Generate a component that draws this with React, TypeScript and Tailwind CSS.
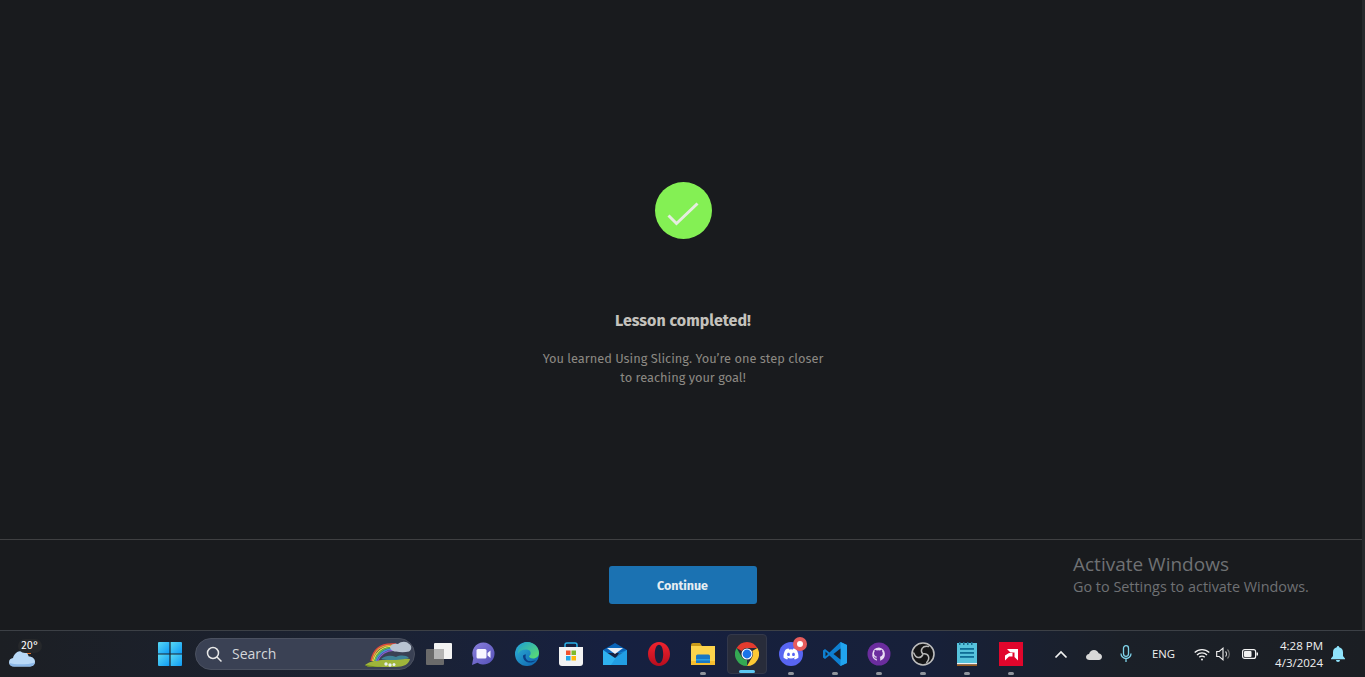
import React from "react";

const sysFont = "font-['Open_Sans','Noto_Sans',sans-serif]";

function Dot() {
  return <span className="absolute bottom-[1px] left-1/2 -ml-[3px] h-[3px] w-[6px] rounded-full bg-[#8f949c]" />;
}

function Slot({ dot, children }: { dot?: boolean; children: React.ReactNode }) {
  return (
    <div className="relative flex h-[44px] w-[44px] shrink-0 items-center justify-center">
      {children}
      {dot && <Dot />}
    </div>
  );
}

function WinLogo() {
  return (
    <svg width="24" height="24" viewBox="0 0 24 24">
      <defs>
        <linearGradient id="w" x1="0" y1="0" x2="1" y2="1">
          <stop offset="0" stopColor="#58d8f4" />
          <stop offset="1" stopColor="#0f9bf5" />
        </linearGradient>
      </defs>
      <path d="M1 0h10.400v11.400H0V1a1 1 0 0 1 1-1z" fill="url(#w)" />
      <path d="M12.600 0H23a1 1 0 0 1 1 1v10.400H12.600z" fill="url(#w)" />
      <path d="M0 12.600h11.400V24H1a1 1 0 0 1-1-1z" fill="url(#w)" />
      <path d="M12.600 12.600H24V23a1 1 0 0 1-1 1H12.600z" fill="url(#w)" />
    </svg>
  );
}

function Weather() {
  return (
    <div className="relative flex h-[47px] w-[48px] shrink-0 items-center justify-center">
      <svg width="26" height="20" viewBox="0 0 26 20" className="absolute left-[9px] top-[16px]">
        <rect x="16" y="3" width="6" height="4" fill="#e8762a" />
        <path d="M5 19.500C2 19.500 0 17.600 0 15.200c0-2.300 1.800-4 4-4.200C5 6.800 8.400 4 12.400 4c3.600 0 6.600 2.200 7.400 5.600 3.400 0 6.200 2.100 6.200 5.200 0 2.800-2.200 4.700-5 4.700z" fill="#b9d9f7" />
        <path d="M5 19.500C2 19.500.5 18 .3 16c5 1.800 19 1.800 25.500-.6-.5 2.500-2.500 4.100-4.800 4.100z" fill="#8cb8e8" />
      </svg>
      <span className="absolute left-[18px] top-[8px] flex h-[14px] w-[24px] items-center justify-center rounded-full bg-[#26282b] text-[11px] leading-none text-white">
        20°
      </span>
    </div>
  );
}

function Rainbow() {
  return (
    <svg width="50" height="30" viewBox="0 0 50 30" className="absolute left-[169px] top-[0px]">
      <path d="M0 26c5-4 12-5 20-5 9-2 18-2 25-1-1 5-6 8-15 8H8c-4 0-7-1-8-2z" fill="#9fb53a" />
      <path d="M0 26c8 1 12 2 20 2H8c-4 0-7-1-8-2z" fill="#6f8a20" />
      <path d="M16 20c5-4 10-4 15-2 4-2 10-2 13 1-6 2-22 3-28 1z" fill="#3f8296" />
      <g fill="none" strokeWidth="1.300">
        <path d="M6 22C8 10 16 3.500 31 5" stroke="#e8463c" />
        <path d="M7.300 22C9.300 11 17 4.800 31 6.300" stroke="#eea63a" />
        <path d="M8.600 22C10.600 12.500 18 6.100 31 7.600" stroke="#e9e14a" />
        <path d="M9.900 22C11.900 14 19 7.400 31 8.900" stroke="#56c25a" />
        <path d="M11.200 22C13.200 15.500 20 8.700 31 10.200" stroke="#4a90dc" />
        <path d="M12.500 22C14.500 17 21 10 31 11.500" stroke="#8a5bd0" />
      </g>
      <path d="M25 8c1-3 5-4 8-3 3-3 9-3 11 0 3 1 3 6 0 7.500-4 1-9 1-13 0-3 0-6-2-6-4.500z" fill="#b9c4d2" />
      <circle cx="21" cy="25" r="1.700" fill="#e8f0f0" />
      <circle cx="25" cy="26" r="1.700" fill="#e8f0f0" />
      <circle cx="29" cy="25.500" r="1.500" fill="#e8f0f0" />
    </svg>
  );
}

function SearchBox() {
  return (
    <div className="relative flex h-[32px] w-[220px] items-center rounded-full border border-[#4b5160] bg-[#3a4154]">
      <svg width="17" height="17" viewBox="0 0 17 17" className="ml-[10px]" fill="none" stroke="#e8e8e8" strokeWidth="1.500">
        <circle cx="7" cy="7" r="5.500" />
        <path d="M11 11l4.500 4.500" />
      </svg>
      <span className={`ml-[9px] text-[14px] leading-none text-[#d4d6da] ${sysFont}`}>Search</span>
      <Rainbow />
    </div>
  );
}

function TaskView() {
  return (
    <svg width="26" height="22" viewBox="0 0 26 22">
      <rect x="8" y="0" width="18" height="16" rx="1" fill="#f3f3f3" />
      <rect x="0" y="6" width="18" height="16" rx="1" fill="#6a6a6a" />
      <rect x="8" y="6" width="10" height="10" fill="#b4b4b4" />
    </svg>
  );
}

function Teams() {
  return (
    <svg width="24" height="24" viewBox="0 0 24 24">
      <defs>
        <linearGradient id="t" x1="0" y1="0" x2="1" y2="1">
          <stop offset="0" stopColor="#8a80dc" />
          <stop offset="1" stopColor="#5450b8" />
        </linearGradient>
      </defs>
      <path d="M12.500 0.500A11 11 0 1 1 6.500 20.700L1 23 2.300 16A11 11 0 0 1 12.500 0.500z" fill="url(#t)" />
      <rect x="5.500" y="7" width="10" height="9.500" rx="1.500" fill="#f7f6ff" />
      <path d="M16.500 11l3-2.500v7.500l-3-2.500z" fill="#f7f6ff" />
    </svg>
  );
}

function Edge() {
  return (
    <svg width="24" height="24" viewBox="0 0 24 24">
      <defs>
        <linearGradient id="e1" x1="0" y1="0" x2="1" y2="1">
          <stop offset="0" stopColor="#2fb5d8" />
          <stop offset="1" stopColor="#0c5fae" />
        </linearGradient>
        <linearGradient id="e2" x1="0" y1="0" x2="1" y2="1">
          <stop offset="0" stopColor="#1e9fd0" />
          <stop offset="1" stopColor="#5fe06a" />
        </linearGradient>
      </defs>
      <circle cx="12" cy="12" r="12" fill="url(#e1)" />
      <path d="M12 0c7 0 12 5 12 11 0 3-2.500 5.500-6 5.500-2.500 0-4-1-4-2.500 2.500-1 2.500-6-2-6.500C7 7.200 4 9 3 12 3 5 7 0 12 0z" fill="url(#e2)" />
      <path d="M8 14c0 3 2 6 6 6.500 2 .2 5 0 7-2.500-2 1-7 2-9 0-1.500-1.500-2-3.500-1-5.500-1.500 0-3 .5-3 1.500z" fill="#0a3f86" />
    </svg>
  );
}

function Store() {
  return (
    <svg width="24" height="24" viewBox="0 0 24 24">
      <path d="M6 6V3a2 2 0 0 1 2-2h8a2 2 0 0 1 2 2v3" fill="none" stroke="#2ab0e6" strokeWidth="1.500" />
      <path d="M0 5h24v16a3 3 0 0 1-3 3H3a3 3 0 0 1-3-3z" fill="#f3f3f3" />
      <rect x="7" y="8.500" width="4.500" height="4.500" fill="#f0512c" />
      <rect x="12.500" y="8.500" width="4.500" height="4.500" fill="#7fba2a" />
      <rect x="7" y="14" width="4.500" height="4.500" fill="#1fa5e8" />
      <rect x="12.500" y="14" width="4.500" height="4.500" fill="#fdb90a" />
    </svg>
  );
}

function Mail() {
  return (
    <svg width="24" height="22" viewBox="0 0 24 22">
      <path d="M0 7l12-7 12 7v3H0z" fill="#0a64b8" />
      <path d="M4 5h16l-8 6z" fill="#eceef4" />
      <path d="M0 7l12 8 12-8v15H0z" fill="#2fb2f0" />
      <path d="M24 22H8l8-12 8-3z" fill="#1d96de" opacity="0.7" />
    </svg>
  );
}

function Opera() {
  return (
    <svg width="24" height="24" viewBox="0 0 24 24">
      <defs>
        <linearGradient id="o" x1="0" y1="0" x2="0" y2="1">
          <stop offset="0" stopColor="#f0232e" />
          <stop offset="1" stopColor="#b80d1e" />
        </linearGradient>
      </defs>
      <path
        fillRule="evenodd"
        d="M12 0C18 0 23 5.400 23 12S18 24 12 24 1 18.600 1 12 6 0 12 0zM12 2.800C9.400 2.800 7.800 7 7.800 12S9.400 21.200 12 21.200 16.200 17 16.200 12 14.600 2.800 12 2.800z"
        fill="url(#o)"
      />
    </svg>
  );
}

function Files() {
  return (
    <svg width="24" height="22" viewBox="0 0 24 22">
      <path d="M0 2a2 2 0 0 1 2-2h7l2 3H0z" fill="#c99a1a" />
      <path d="M0 3h24v19H0z" fill="#fdd44c" />
      <path d="M0 18h24v4H0z" fill="#f6bd2e" />
      <path d="M5 13a1.500 1.500 0 0 1 1.500-1.500h11A1.500 1.500 0 0 1 19 13v7H5z" fill="#1a78c4" />
      <path d="M5 16h14v1.500H5z" fill="#2aa1e8" />
    </svg>
  );
}

function Chrome() {
  return (
    <svg width="24" height="24" viewBox="0 0 24 24">
      <path d="M12 0a12 12 0 0 1 10.400 6H12a6 6 0 0 0-5.200 3L1.600 6A12 12 0 0 1 12 0z" fill="#e33b2e" />
      <path d="M22.400 6A12 12 0 0 1 12 24l5.200-9A6 6 0 0 0 17.200 9z" fill="#fcc934" />
      <path d="M12 24A12 12 0 0 1 1.600 6l5.200 9a6 6 0 0 0 5.200 3z" fill="#34a853" />
      <circle cx="12" cy="12" r="5.500" fill="#fff" />
      <circle cx="12" cy="12" r="4.400" fill="#1a73e8" />
    </svg>
  );
}

function Discord() {
  return (
    <div className="relative">
      <svg width="24" height="24" viewBox="0 0 24 24">
        <circle cx="12" cy="12" r="12" fill="#5865f2" />
        <path d="M17.300 7.500a12 12 0 0 0-3-.9l-.4.800a11 11 0 0 0-3.800 0l-.4-.8a12 12 0 0 0-3 .9C4.800 10.300 4.300 13 4.600 15.700a12 12 0 0 0 3.600 1.800l.8-1.200-1.200-.6.300-.2a8.700 8.700 0 0 0 7.800 0l.3.200-1.200.6.800 1.200a12 12 0 0 0 3.600-1.800c.4-3.100-.6-5.800-2.100-8.200zM9.500 14c-.8 0-1.400-.7-1.400-1.600s.6-1.600 1.400-1.600 1.400.7 1.400 1.600-.6 1.600-1.400 1.600zm5 0c-.8 0-1.400-.7-1.400-1.600s.6-1.600 1.400-1.600 1.400.7 1.400 1.600-.6 1.600-1.400 1.600z" fill="#fff" />
      </svg>
      <span className="absolute -right-[4px] -top-[5px] flex h-[14px] w-[14px] items-center justify-center rounded-full bg-[#e85c5c]">
        <span className="h-[6px] w-[6px] rounded-full bg-white" />
      </span>
    </div>
  );
}

function VSCode() {
  return (
    <svg width="24" height="24" viewBox="0 0 24 24">
      <path d="M17.500 0L24 3v18l-6.500 3-11-10.500L2 17l-2-1.500V8.500L2 7l4.500 3.500z" fill="#0e7fd0" />
      <path d="M17.500 0L24 3v18l-6.500 3z" fill="#21a4ee" />
      <path d="M17.500 6.500L10.500 12l7 5.500z" fill="#1b1f2a" />
      <path d="M2.500 9.500L5 12l-2.500 2.500z" fill="#1b1f2a" />
    </svg>
  );
}

function GitHub() {
  return (
    <svg width="24" height="24" viewBox="0 0 24 24">
      <circle cx="12" cy="12" r="11.500" fill="#6b2d9e" />
      <path d="M12 5.500a6.800 6.800 0 0 0-2.200 13.200v-2c-1.900.4-2.300-.9-2.300-.9-.3-.8-.8-1-.8-1-.6-.4 0-.4 0-.4.700 0 1 .7 1 .7.600 1 1.600.7 2 .5 0-.4.200-.7.400-.9-1.500-.2-3.100-.8-3.100-3.400 0-.7.300-1.300.7-1.800-.1-.2-.3-.9.100-1.800 0 0 .6-.2 1.900.7a6.500 6.500 0 0 1 3.400 0c1.300-.9 1.900-.7 1.900-.7.400.9.200 1.600.1 1.800.4.500.7 1.100.7 1.800 0 2.600-1.600 3.200-3.100 3.400.2.200.5.600.5 1.200v2.800A6.800 6.800 0 0 0 12 5.500z" fill="#e8dcf2" />
    </svg>
  );
}

function OBS() {
  const arm = "M11.500 11.500C9 8 11 3.500 17.500 4.500";
  return (
    <svg width="24" height="24" viewBox="0 0 24 24">
      <circle cx="12" cy="12" r="11" fill="#151517" stroke="#bdbdbd" strokeWidth="1.600" />
      <g fill="none" stroke="#b8b8b8" strokeWidth="1.500" strokeLinecap="round">
        <path d="M11.500 11.500C9 8 11 3.500 17.500 4.500" />
        <path d={arm} transform="rotate(120 12 12)" />
        <path d={arm} transform="rotate(240 12 12)" />
      </g>
    </svg>
  );
}

function Notepad() {
  return (
    <svg width="20" height="24" viewBox="0 0 20 24">
      <rect x="0" y="1" width="20" height="20" fill="#56c2dc" />
      <rect x="0" y="21" width="20" height="1.500" fill="#f1f1f1" />
      <rect x="0" y="22.500" width="20" height="1.500" fill="#9a5a1c" />
      <g fill="#0f6d96">
        <rect x="3" y="6" width="14" height="1.800" />
        <rect x="3" y="10" width="14" height="1.800" />
        <rect x="3" y="14" width="14" height="1.800" />
      </g>
      <g fill="#1b6a8e">
        <rect x="2" y="0" width="1.500" height="3" />
        <rect x="6" y="0" width="1.500" height="3" />
        <rect x="10" y="0" width="1.500" height="3" />
        <rect x="14" y="0" width="1.500" height="3" />
      </g>
    </svg>
  );
}

function AMD() {
  return (
    <svg width="24" height="24" viewBox="0 0 24 24">
      <rect width="24" height="24" fill="#e1062c" />
      <path d="M8 7h11v11.500l-3.500-3.500v-4.500H11.500z" fill="#fff" />
      <path d="M10 11h3.500v3.500H10L6 18.500v-5z" fill="#fff" />
    </svg>
  );
}

function Tray() {
  return (
    <div className="flex h-full items-center text-[#f0f0f0]">
      <svg width="14" height="9" viewBox="0 0 14 9" className="ml-[1px]" fill="none" stroke="#f2f2f2" strokeWidth="1.700">
        <path d="M1.500 7.500L7 2l5.500 5.500" />
      </svg>
      <svg width="16" height="11" viewBox="0 0 16 11" className="ml-[18px]">
        <path d="M3.500 11C1.500 11 0 9.700 0 8s1.300-3 3-3.100C3.800 2.400 5.800 1 8 1c2.300 0 4 1.400 4.600 3.300C14.600 4.500 16 6 16 7.800 16 9.600 14.600 11 12.800 11z" fill="#d8d8d8" />
      </svg>
      <svg width="12" height="18" viewBox="0 0 12 18" className="ml-[18px]" fill="none" stroke="#7fd3ea" strokeWidth="1.300">
        <rect x="3.500" y=".7" width="5" height="10.600" rx="2.500" />
        <path d="M1 8.500a5 5 0 0 0 10 0M6 13.500V17" />
      </svg>
      <span className={`ml-[20px] w-[24px] text-[11.300px] leading-none text-[#f0f0f0] ${sysFont}`}>ENG</span>
      <svg width="16" height="13" viewBox="0 0 16 13" className="ml-[18px]" fill="none" stroke="#f2f2f2" strokeWidth="1.300">
        <path d="M.7 4.500a10.500 10.500 0 0 1 14.600 0M3 7a7 7 0 0 1 10 0M5.300 9.300a3.600 3.600 0 0 1 5.400 0" />
        <circle cx="8" cy="11.500" r="1" fill="#f2f2f2" stroke="none" />
      </svg>
      <svg width="16" height="14" viewBox="0 0 16 14" className="ml-[6px]" fill="none" strokeWidth="1.100">
        <path d="M.7 4.500h2.500L7 1.200v11.600L3.200 9.500H.7z" stroke="#f2f2f2" />
        <path d="M9.500 4.500a3.500 3.500 0 0 1 0 5" stroke="#d0d0d0" />
        <path d="M11.500 2.500a6.500 6.500 0 0 1 0 9" stroke="#777" />
      </svg>
      <svg width="16" height="10" viewBox="0 0 16 10" className="ml-[10px]">
        <rect x=".6" y=".6" width="13" height="8.800" rx="2" fill="none" stroke="#f2f2f2" strokeWidth="1.200" />
        <rect x="2" y="2" width="7.500" height="6" rx="1" fill="#f2f2f2" />
        <rect x="14.500" y="3.500" width="1.500" height="3" fill="#f2f2f2" />
      </svg>
      <div className={`ml-[9px] flex w-[56px] flex-col items-end text-[11.500px] leading-[17px] text-[#f0f0f0] ${sysFont}`}>
        <span>4:28 PM</span>
        <span>4/3/2024</span>
      </div>
      <svg width="14" height="16" viewBox="0 0 14 16" className="ml-[8px]">
        <path d="M7 0a1.200 1.200 0 0 1 1.200 1.200C10.700 1.800 12 3.800 12 6.200V10l2 2.500v.8H0v-.8L2 10V6.200c0-2.400 1.300-4.400 3.800-5A1.200 1.200 0 0 1 7 0z" fill="#8fe3fb" />
        <path d="M5 14h4a2 2 0 0 1-4 0z" fill="#8fe3fb" />
      </svg>
    </div>
  );
}

export default function App() {
  return (
    <div className="flex h-[677px] w-full flex-col overflow-hidden bg-[#191b1e] font-['Fira_Sans','Noto_Sans',sans-serif]">
      <div className="flex h-[630px] shrink-0">
        <div className="flex min-w-0 flex-1 flex-col">
          <main className="flex h-[539px] shrink-0 flex-col items-center pl-[4px] pt-[182px]">
            <div className="flex h-[57px] w-[57px] items-center justify-center rounded-full bg-[#84f054]">
              <svg width="32" height="32" viewBox="0 0 32 32" fill="none" stroke="#e6ece0" strokeWidth="3">
                <path d="M1.500 20.500l8 8 21-20" />
              </svg>
            </div>
            <h1 className="mt-[72px] text-[16px] font-bold leading-[20px] text-[#c4c2bd]">Lesson completed!</h1>
            <p className="mt-[18px] w-[300px] text-center text-[12.800px] leading-[19px] text-[#8c8983]">
              You learned Using Slicing. You’re one step closer
              <br />
              to reaching your goal!
            </p>
          </main>

          <footer className="relative flex h-[91px] shrink-0 items-center justify-center border-t border-[#3f4042] pl-[3px]">
            <button className="mt-[-1px] h-[38px] w-[148px] rounded-[3px] bg-[#1b72b2] pt-[3px] text-[12.500px] font-bold text-[#e6edf2]">
              Continue
            </button>
            <div className={`absolute left-[1073px] top-[12px] text-[#6f7174] ${sysFont}`}>
              <div className="text-[19px] leading-[24px]">Activate Windows</div>
              <div className="text-[14.400px] leading-[22px]">Go to Settings to activate Windows.</div>
            </div>
          </footer>
        </div>
        <div className="w-[3px] shrink-0 bg-[#26282b]" />
      </div>

      <div className="relative flex h-[47px] shrink-0 items-center border-t border-[#3c4046]">
        <div className="flex h-full w-full items-center bg-[linear-gradient(90deg,#1c1f24_0%,#1b2233_28%,#162040_45%,#172039_68%,#1b2028_82%,#1b1e23_100%)]">
          <Weather />
          <div className="ml-[100px] flex h-[44px] w-[44px] shrink-0 items-center justify-center">
            <WinLogo />
          </div>
          <div className="ml-[3px] mr-[2px]">
            <SearchBox />
          </div>
          <Slot><TaskView /></Slot>
          <Slot><Teams /></Slot>
          <Slot><Edge /></Slot>
          <Slot><Store /></Slot>
          <Slot><Mail /></Slot>
          <Slot><Opera /></Slot>
          <Slot dot><Files /></Slot>
          <div className="relative mx-[2px] flex h-[40px] w-[40px] shrink-0 items-center justify-center rounded-[4px] border border-[#33384a] bg-[#282c3a]">
            <Chrome />
            <span className="absolute bottom-0 left-1/2 -ml-[8px] h-[3px] w-[16px] rounded-full bg-[#5cc8f2]" />
          </div>
          <Slot dot><Discord /></Slot>
          <Slot dot><VSCode /></Slot>
          <Slot dot><GitHub /></Slot>
          <Slot dot><OBS /></Slot>
          <Slot dot><Notepad /></Slot>
          <Slot dot><AMD /></Slot>
          <div className="ml-[20px] h-full">
            <Tray />
          </div>
        </div>
      </div>
    </div>
  );
}
